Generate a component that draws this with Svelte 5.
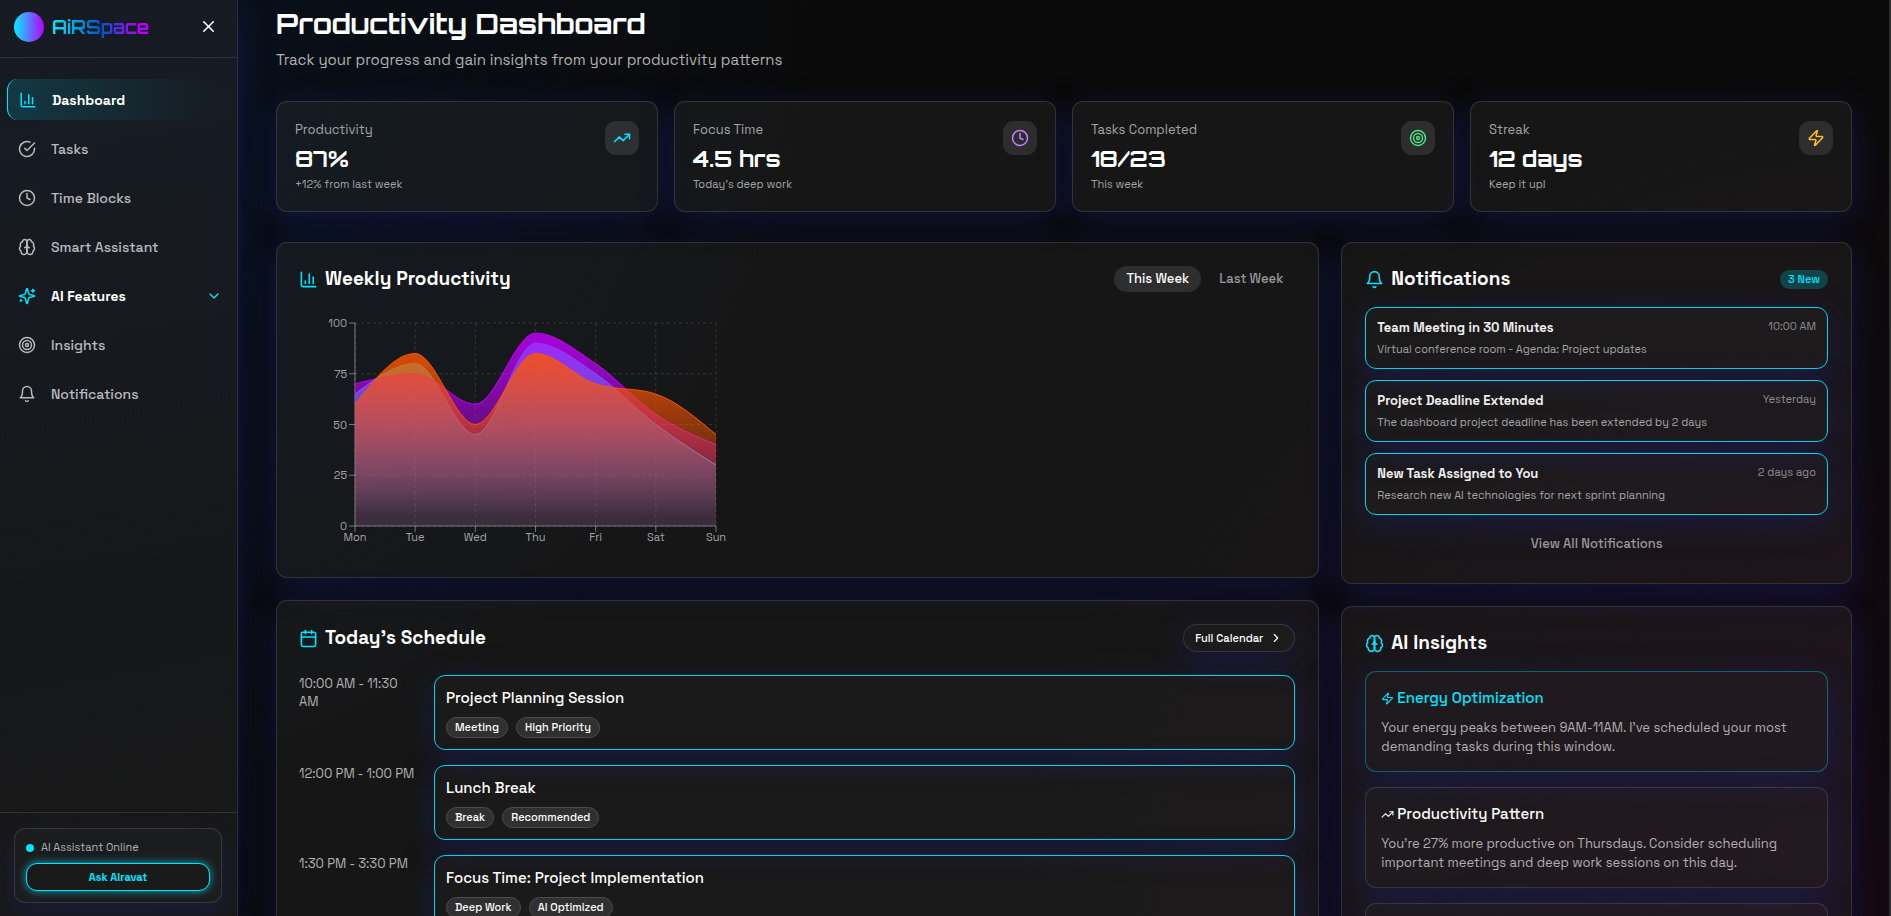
<script>
  const icons = {
    chart: '<path d="M3 3v16a2 2 0 0 0 2 2h16"/><path d="M18 17V9"/><path d="M13 17V5"/><path d="M8 17v-3"/>',
    check: '<path d="M22 11.08V12a10 10 0 1 1-5.93-9.14"/><path d="m9 11 3 3L22 4"/>',
    clock: '<circle cx="12" cy="12" r="10"/><path d="M12 6v6l4 2"/>',
    brain:
      '<path d="M12 5a3 3 0 1 0-5.997.125 4 4 0 0 0-2.526 5.77 4 4 0 0 0 .556 6.588A4 4 0 1 0 12 18Z"/><path d="M12 5a3 3 0 1 1 5.997.125 4 4 0 0 1 2.526 5.77 4 4 0 0 1-.556 6.588A4 4 0 1 1 12 18Z"/><path d="M15 13a4.5 4.5 0 0 1-3-4 4.5 4.5 0 0 1-3 4"/><path d="M12 9v9"/>',
    sparkles:
      '<path d="M9.937 15.5A2 2 0 0 0 8.5 14.063l-6.135-1.582a.5.5 0 0 1 0-.962L8.5 9.936A2 2 0 0 0 9.937 8.5l1.582-6.135a.5.5 0 0 1 .963 0L14.063 8.5A2 2 0 0 0 15.5 9.937l6.135 1.581a.5.5 0 0 1 0 .964L15.5 14.063a2 2 0 0 0-1.437 1.437l-1.582 6.135a.5.5 0 0 1-.963 0z"/><path d="M20 3v4"/><path d="M22 5h-4"/><path d="M4 17v2"/><path d="M5 18H3"/>',
    target: '<circle cx="12" cy="12" r="10"/><circle cx="12" cy="12" r="6"/><circle cx="12" cy="12" r="2"/>',
    bell: '<path d="M6 8a6 6 0 0 1 12 0c0 7 3 9 3 9H3s3-2 3-9"/><path d="M10.3 21a1.94 1.94 0 0 0 3.4 0"/>',
    close: '<path d="M18 6 6 18"/><path d="m6 6 12 12"/>',
    down: '<path d="m6 9 6 6 6-6"/>',
    right: '<path d="m9 18 6-6-6-6"/>',
    trend: '<path d="m22 7-8.5 8.5-5-5L2 17"/><path d="M16 7h6v6"/>',
    zap: '<path d="M4 14a1 1 0 0 1-.78-1.63l9.9-10.2a.5.5 0 0 1 .86.46l-1.92 6.02A1 1 0 0 0 13 10h7a1 1 0 0 1 .78 1.63l-9.9 10.2a.5.5 0 0 1-.86-.46l1.92-6.02A1 1 0 0 0 11 14z"/>',
    calendar:
      '<path d="M8 2v4"/><path d="M16 2v4"/><rect width="18" height="18" x="3" y="4" rx="2"/><path d="M3 10h18"/>',
  };

  const nav = [
    { label: 'Dashboard', icon: 'chart', active: true },
    { label: 'Tasks', icon: 'check' },
    { label: 'Time Blocks', icon: 'clock' },
    { label: 'Smart Assistant', icon: 'brain' },
    { label: 'AI Features', icon: 'sparkles', expandable: true },
    { label: 'Insights', icon: 'target' },
    { label: 'Notifications', icon: 'bell' },
  ];

  const stats = [
    { label: 'Productivity', value: '87%', note: '+12% from last week', icon: 'trend', tone: 'cyan' },
    { label: 'Focus Time', value: '4.5 hrs', note: 'Today’s deep work', icon: 'clock', tone: 'violet' },
    { label: 'Tasks Completed', value: '18/23', note: 'This week', icon: 'target', tone: 'green' },
    { label: 'Streak', value: '12 days', note: 'Keep it up!', icon: 'zap', tone: 'yellow' },
  ];

  const notifications = [
    { title: 'Team Meeting in 30 Minutes', text: 'Virtual conference room - Agenda: Project updates', time: '10:00 AM' },
    { title: 'Project Deadline Extended', text: 'The dashboard project deadline has been extended by 2 days', time: 'Yesterday' },
    { title: 'New Task Assigned to You', text: 'Research new AI technologies for next sprint planning', time: '2 days ago' },
  ];

  const schedule = [
    { time: '10:00 AM - 11:30 AM', title: 'Project Planning Session', tags: ['Meeting', 'High Priority'] },
    { time: '12:00 PM - 1:00 PM', title: 'Lunch Break', tags: ['Break', 'Recommended'] },
    { time: '1:30 PM - 3:30 PM', title: 'Focus Time: Project Implementation', tags: ['Deep Work', 'AI Optimized'] },
  ];

  const insights = [
    {
      title: 'Energy Optimization',
      icon: 'zap',
      highlight: true,
      text: 'Your energy peaks between 9AM-11AM. I’ve scheduled your most demanding tasks during this window.',
    },
    {
      title: 'Productivity Pattern',
      icon: 'trend',
      text: 'You’re 27% more productive on Thursdays. Consider scheduling important meetings and deep work sessions on this day.',
    },
    {
      title: 'Focus Suggestion',
      icon: 'target',
      text: 'Try a short break between your afternoon sessions to keep your focus.',
    },
  ];

  let week = $state('This Week');

  const days = ['Mon', 'Tue', 'Wed', 'Thu', 'Fri', 'Sat', 'Sun'];
  const series = [
    { id: 'focus', color: '#00f0ff', values: [65, 80, 45, 90, 75, 50, 30] },
    { id: 'productivity', color: '#c400ff', values: [70, 75, 60, 95, 80, 55, 40] },
    { id: 'energy', color: '#ff5500', values: [60, 85, 50, 85, 70, 65, 45] },
  ];
  const plot = { left: 56, top: 8, width: 361, height: 203 };
  const px = (i) => plot.left + (plot.width / 6) * i;
  const py = (v) => plot.top + plot.height * (1 - v / 100);

  // Monotone cubic interpolation through the points.
  function curve(values) {
    const p = values.map((v, i) => [px(i), py(v)]);
    const n = p.length;
    const h = [];
    const s = [];
    for (let i = 0; i < n - 1; i++) {
      h.push(p[i + 1][0] - p[i][0]);
      s.push((p[i + 1][1] - p[i][1]) / h[i]);
    }
    const t = [];
    for (let i = 1; i < n - 1; i++) {
      const mean = (s[i - 1] * h[i] + s[i] * h[i - 1]) / (h[i - 1] + h[i]);
      t[i] =
        (Math.sign(s[i - 1]) + Math.sign(s[i])) *
        Math.min(Math.abs(s[i - 1]), Math.abs(s[i]), 0.5 * Math.abs(mean));
    }
    t[0] = (3 * s[0] - t[1]) / 2;
    t[n - 1] = (3 * s[n - 2] - t[n - 2]) / 2;
    let d = `M${p[0][0]},${p[0][1]}`;
    for (let i = 0; i < n - 1; i++) {
      const dx = h[i] / 3;
      d += `C${p[i][0] + dx},${p[i][1] + dx * t[i]},${p[i + 1][0] - dx},${p[i + 1][1] - dx * t[i + 1]},${p[i + 1][0]},${p[i + 1][1]}`;
    }
    return d;
  }
  const area = (values) => `${curve(values)}L${px(6)},${py(0)}L${px(0)},${py(0)}Z`;
</script>

{#snippet icon(name, size)}
  <svg
    class="icon"
    width={size}
    height={size}
    viewBox="0 0 24 24"
    fill="none"
    stroke="currentColor"
    stroke-width="2"
    stroke-linecap="round"
    stroke-linejoin="round"
    aria-hidden="true">{@html icons[name]}</svg
  >
{/snippet}

<div class="app">
  <aside class="sidebar">
    <div class="brand">
      <span class="orb"></span>
      <span class="name">AiRSpace</span>
      <button class="close" aria-label="Close sidebar">{@render icon('close', 19)}</button>
    </div>

    <nav>
      {#each nav as item}
        <a href="#{item.icon}" class:active={item.active} class:open={item.expandable}>
          {@render icon(item.icon, 18)}
          <span>{item.label}</span>
          {#if item.expandable}<span class="chevron">{@render icon('down', 16)}</span>{/if}
        </a>
      {/each}
    </nav>

    <div class="assistant-wrap">
      <div class="assistant">
        <p><i></i>AI Assistant Online</p>
        <button>Ask AIravat</button>
      </div>
    </div>
  </aside>

  <main>
    <header>
      <h1>Productivity Dashboard</h1>
      <p>Track your progress and gain insights from your productivity patterns</p>
    </header>

    <section class="stats">
      {#each stats as s}
        <article class="card stat">
          <div>
            <h2>{s.label}</h2>
            <strong>{s.value}</strong>
            <small>{s.note}</small>
          </div>
          <span class="badge {s.tone}">{@render icon(s.icon, 18)}</span>
        </article>
      {/each}
    </section>

    <div class="columns">
      <div class="column wide">
        <section class="card panel">
          <div class="head">
            <h2>{@render icon('chart', 19)}Weekly Productivity</h2>
            <div class="tabs">
              {#each ['This Week', 'Last Week'] as w}
                <button class:selected={week === w} onclick={() => (week = w)}>{w}</button>
              {/each}
            </div>
          </div>
          <svg class="chart" width="440" height="240" viewBox="0 0 440 240" role="img" aria-label="Weekly productivity">
            <defs>
              {#each series as s}
                <linearGradient id="fill-{s.id}" x1="0" y1="0" x2="0" y2="1">
                  <stop offset="5%" stop-color={s.color} stop-opacity="0.8" />
                  <stop offset="95%" stop-color={s.color} stop-opacity="0.1" />
                </linearGradient>
              {/each}
            </defs>
            <g class="grid">
              {#each [0, 25, 50, 75, 100] as v}
                <line x1={px(0)} x2={px(6)} y1={py(v)} y2={py(v)} />
              {/each}
              {#each days as _, i}
                <line x1={px(i)} x2={px(i)} y1={py(100)} y2={py(0)} />
              {/each}
            </g>
            <g class="axis">
              <line x1={px(0)} x2={px(6)} y1={py(0)} y2={py(0)} />
              <line x1={px(0)} x2={px(0)} y1={py(100)} y2={py(0)} />
              {#each [0, 25, 50, 75, 100] as v}
                <line x1={px(0) - 6} x2={px(0)} y1={py(v)} y2={py(v)} />
                <text x={px(0) - 8} y={py(v) + 4} text-anchor="end">{v}</text>
              {/each}
              {#each days as d, i}
                <line x1={px(i)} x2={px(i)} y1={py(0)} y2={py(0) + 6} />
                <text x={px(i)} y={py(0) + 15} text-anchor="middle">{d}</text>
              {/each}
            </g>
            {#each series as s}
              <path d={area(s.values)} fill="url(#fill-{s.id})" />
              <path d={curve(s.values)} fill="none" stroke={s.color} />
            {/each}
          </svg>
        </section>

        <section class="card panel agenda">
          <div class="head">
            <h2>{@render icon('calendar', 19)}Today’s Schedule</h2>
            <button class="calendar">Full Calendar {@render icon('right', 14)}</button>
          </div>
          <div class="events">
            {#each schedule as e}
              <div class="event">
                <time>{e.time}</time>
                <div class="card outlined slot">
                  <h3>{e.title}</h3>
                  <div class="tags">
                    {#each e.tags as t}<span>{t}</span>{/each}
                  </div>
                </div>
              </div>
            {/each}
          </div>
        </section>
      </div>

      <div class="column side">
        <section class="card panel">
          <div class="head">
            <h2>{@render icon('bell', 19)}Notifications</h2>
            <span class="count">3 New</span>
          </div>
          <div class="list">
            {#each notifications as n}
              <article class="card outlined notice">
                <div>
                  <h3>{n.title}</h3>
                  <time>{n.time}</time>
                </div>
                <p>{n.text}</p>
              </article>
            {/each}
          </div>
          <button class="all">View All Notifications</button>
        </section>

        <section class="card panel">
          <div class="head">
            <h2>{@render icon('brain', 19)}AI Insights</h2>
          </div>
          <div class="insights">
            {#each insights as n}
              <article class="card insight" class:highlight={n.highlight}>
                <h3>{@render icon(n.icon, 13)}{n.title}</h3>
                <p>{n.text}</p>
              </article>
            {/each}
          </div>
        </section>
      </div>
    </div>
  </main>
</div>

<style>
  :global(body) {
    background: #0a0a0a;
  }

  .app {
    --cyan: #00e5ff;
    --line: rgba(255, 255, 255, 0.12);
    --muted: #a2a4a6;
    display: flex;
    height: 100vh;
    overflow: hidden;
    color: #fff;
    font: 13px/20px 'Space Grotesk', Inter, sans-serif;
    background:
      radial-gradient(circle at 0 0, rgba(0, 60, 150, 0.15), transparent 40%),
      radial-gradient(circle at 100% 100%, rgba(110, 0, 80, 0.1), transparent 42%),
      #0a0a0a;
  }

  .app :global(*) {
    box-sizing: border-box;
  }

  h1,
  h2,
  h3,
  p {
    margin: 0;
  }

  button {
    font: inherit;
    color: inherit;
    background: none;
    border: 0;
    padding: 0;
    cursor: pointer;
  }

  .icon {
    flex: none;
    display: block;
  }

  .card {
    border: 1px solid var(--line);
    border-radius: 11px;
    background: rgba(255, 255, 255, 0.05);
    box-shadow: 0 8px 32px rgba(31, 38, 135, 0.37);
  }

  .card .card {
    background: rgba(255, 255, 255, 0.02);
  }

  .sidebar {
    flex: none;
    width: 238px;
    display: flex;
    flex-direction: column;
    border-right: 1px solid #2b2f38;
    background: linear-gradient(170deg, #161b23, #171a21 30%, #161719 65%, #191919);
    box-shadow: 0 8px 32px rgba(31, 38, 135, 0.37);
  }

  .brand {
    display: flex;
    align-items: center;
    gap: 8px;
    height: 58px;
    padding: 0 19px 4px 14px;
    border-bottom: 1px solid #2f3339;
  }

  .orb {
    width: 30px;
    height: 30px;
    border-radius: 50%;
    background: linear-gradient(90deg, #00f0ff, #b800ff);
  }

  .name {
    font: 700 18px/28px Orbitron, 'DejaVu Sans', sans-serif;
    background: linear-gradient(90deg, #00f0ff, #0055cc 50%, #b800ff 90%);
    -webkit-background-clip: text;
    background-clip: text;
    color: transparent;
  }

  .close {
    margin-left: auto;
  }

  nav {
    flex: 1;
    display: flex;
    flex-direction: column;
    gap: 8px;
    padding: 21px 8px 21px 7px;
  }

  nav a {
    display: flex;
    align-items: center;
    gap: 15px;
    height: 41px;
    padding: 0 7px 0 11px;
    border-radius: 11px;
    color: #b8babd;
    font-size: 14px;
    font-weight: 500;
    text-decoration: none;
  }

  nav .active {
    border-left: 1px solid var(--cyan);
    background: linear-gradient(90deg, rgba(0, 229, 255, 0.15), transparent 95%);
    color: #fff;
    font-weight: 600;
  }

  nav .open {
    color: #fff;
    font-weight: 600;
  }

  nav .active .icon,
  nav .open .icon {
    color: var(--cyan);
  }

  .chevron {
    margin-left: auto;
  }

  .assistant-wrap {
    padding: 15px 15px 13px 14px;
    border-top: 1px solid #303133;
  }

  .assistant {
    padding: 10px 11px 11px;
    border: 1px solid var(--line);
    border-radius: 11px;
    background: #1b1c1d;
    box-shadow: 0 8px 24px rgba(31, 38, 135, 0.3);
  }

  .assistant p {
    display: flex;
    align-items: center;
    gap: 7px;
    margin-bottom: 7px;
    font-size: 11px;
    line-height: 17px;
    color: #a9b4b4;
  }

  .assistant i {
    width: 8px;
    height: 8px;
    border-radius: 50%;
    background: var(--cyan);
  }

  .assistant button {
    width: 100%;
    height: 28px;
    border: 1px solid var(--cyan);
    border-radius: 11px;
    background: #1a1a1a;
    box-shadow: 0 0 9px rgba(0, 229, 255, 0.7);
    color: var(--cyan);
    font-size: 11px;
    font-weight: 600;
  }

  main {
    flex: 1;
    min-width: 0;
    padding: 4px 37px 0 38px;
    border-right: 2px solid #2c2c2c;
  }

  header {
    margin-bottom: 29px;
  }

  h1 {
    font: 700 28px/40px Orbitron, Inter, sans-serif;
  }

  header p {
    margin-top: 4px;
    font-size: 15px;
    line-height: 24px;
    color: #b2b2b2;
  }

  .stats {
    display: grid;
    grid-template-columns: repeat(4, 1fr);
    gap: 16px;
    margin-bottom: 30px;
  }

  .stat {
    display: flex;
    justify-content: space-between;
    padding: 19px 18px 18px;
  }

  .stat h2 {
    font-size: 13px;
    font-weight: 400;
    line-height: 18px;
    color: var(--muted);
  }

  .stat strong {
    display: block;
    margin-top: 4px;
    font: 700 22px/32px Orbitron, Inter, sans-serif;
  }

  .stat small {
    display: block;
    margin-top: 1px;
    font-size: 11px;
    line-height: 17px;
    color: var(--muted);
  }

  .badge {
    display: grid;
    place-items: center;
    width: 34px;
    height: 34px;
    border-radius: 11px;
    background: rgba(255, 255, 255, 0.1);
  }

  .cyan {
    color: var(--cyan);
  }
  .violet {
    color: #c084fc;
  }
  .green {
    color: #4ade80;
  }
  .yellow {
    color: #fbbf24;
  }

  .columns {
    display: grid;
    grid-template-columns: repeat(3, 1fr);
    align-items: start;
    gap: 22px;
  }

  .column {
    display: grid;
    gap: 22px;
    min-width: 0;
  }

  .wide {
    grid-column: span 2;
  }

  .panel {
    padding: 22px 23px 22px 22px;
  }

  .side .panel {
    padding: 22px 23px;
  }

  .head {
    display: flex;
    align-items: center;
    justify-content: space-between;
    height: 28px;
    margin-bottom: 22px;
  }

  .agenda .head {
    height: 30px;
  }

  .side .head {
    margin-bottom: 14px;
  }

  .head h2 {
    display: flex;
    align-items: center;
    gap: 7px;
    font-size: 19px;
    font-weight: 600;
    line-height: 28px;
  }

  .head h2 .icon {
    color: var(--cyan);
  }

  .tabs {
    display: flex;
    gap: 6px;
  }

  .tabs button {
    height: 26px;
    padding: 0 12px;
    border-radius: 13px;
    color: #97999b;
    font-weight: 500;
  }

  .tabs .selected {
    background: #2e2e2e;
    color: #fff;
  }

  .chart {
    display: block;
  }

  .grid line {
    stroke: rgba(255, 255, 255, 0.13);
    stroke-dasharray: 3 3;
  }

  .axis line {
    stroke: rgba(255, 255, 255, 0.4);
  }

  .axis text {
    fill: #a2a4a6;
    font-size: 11px;
  }

  .calendar {
    display: flex;
    align-items: center;
    gap: 6px;
    height: 28px;
    padding: 0 11px;
    border: 1px solid var(--line);
    border-radius: 14px;
    background: #1b1b1c;
    box-shadow: 0 8px 32px rgba(31, 38, 135, 0.37);
    font-size: 11px;
    font-weight: 500;
  }

  .outlined {
    border-color: #00d4ee;
  }

  .events {
    display: grid;
    gap: 15px;
  }

  .event {
    display: grid;
    grid-template-columns: 120px 1fr;
    gap: 15px;
  }

  .event time {
    line-height: 18px;
    color: #b0b1b2;
  }

  .slot {
    height: 75px;
    padding: 10px 11px;
  }

  .slot h3 {
    font-size: 15px;
    font-weight: 500;
    line-height: 24px;
  }

  .tags {
    display: flex;
    gap: 8px;
    margin-top: 7px;
  }

  .tags span {
    padding: 0 8px;
    border: 1px solid #4c4c4c;
    border-radius: 11px;
    background: #303030;
    font-size: 11px;
    font-weight: 500;
    line-height: 19px;
  }

  .count {
    padding: 0 8px;
    border-radius: 10px;
    background: rgba(0, 229, 255, 0.22);
    color: var(--cyan);
    font-size: 11px;
    font-weight: 500;
    line-height: 19px;
  }

  .list {
    display: grid;
    gap: 11px;
  }

  .notice {
    height: 62px;
    padding: 9px 11px;
  }

  .notice div {
    display: flex;
    justify-content: space-between;
  }

  .notice h3 {
    font-size: 13px;
    font-weight: 600;
    line-height: 22px;
    color: #eee;
  }

  .notice time {
    font-size: 11px;
    line-height: 18px;
    color: #8d8d90;
  }

  .notice p {
    font-size: 11px;
    line-height: 20px;
    color: var(--muted);
  }

  .all {
    display: block;
    width: 100%;
    height: 35px;
    margin-top: 11px;
    color: #9a989c;
    font-weight: 500;
  }

  .insights {
    display: grid;
    gap: 15px;
  }

  .insight {
    padding: 14px 15px 15px;
  }

  .highlight {
    border-color: rgba(0, 229, 255, 0.35);
  }

  .insight h3 {
    display: flex;
    align-items: center;
    gap: 3px;
    margin-bottom: 8px;
    font-size: 15px;
    font-weight: 500;
    line-height: 24px;
  }

  .highlight h3 {
    color: var(--cyan);
  }

  .insight p {
    line-height: 19px;
    color: #b0aeb1;
  }
</style>
